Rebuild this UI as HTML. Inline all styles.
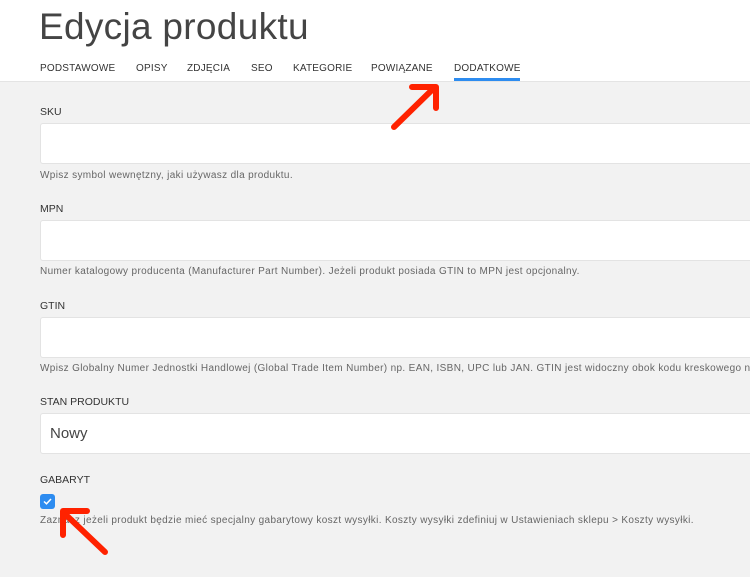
<!DOCTYPE html>
<html><head><meta charset="utf-8"><style>
*{margin:0;padding:0;box-sizing:border-box}
body{width:750px;height:577px;overflow:hidden;background:#f2f2f2;font-family:"Liberation Sans",sans-serif;position:relative}
.hdr{position:absolute;left:0;top:0;width:750px;height:82px;background:#fff;border-bottom:1px solid #e4e4e4}
h1{position:absolute;left:39px;top:6px;font-weight:normal;font-size:37px;color:#444;letter-spacing:0.3px}
.tab{position:absolute;top:63px;font-size:10px;color:#333;letter-spacing:0.2px}
.lbl{position:absolute;left:40px;font-size:10.5px;color:#333}
.inp{position:absolute;left:40px;width:710px;height:41px;background:#fff;border:1px solid #e3e3e3;border-right:none;border-radius:3px 0 0 3px}
.help{position:absolute;left:40px;width:710px;overflow:hidden;font-size:10px;color:#666;white-space:nowrap;letter-spacing:0.35px}
</style></head><body>
<div class="hdr">
<h1>Edycja produktu</h1>
<div class="tab" style="left:40px">PODSTAWOWE</div>
<div class="tab" style="left:136px">OPISY</div>
<div class="tab" style="left:187px">ZDJĘCIA</div>
<div class="tab" style="left:251px">SEO</div>
<div class="tab" style="left:293px">KATEGORIE</div>
<div class="tab" style="left:371px">POWIĄZANE</div>
<div class="tab" style="left:454px">DODATKOWE</div>
<div style="position:absolute;left:454px;top:78px;width:66px;height:3px;background:#2d8cf0"></div>
</div>
<div class="lbl" style="top:106px">SKU</div>
<div class="inp" style="top:123px"></div>
<div class="help" style="top:170px">Wpisz symbol wewnętzny, jaki używasz dla produktu.</div>
<div class="lbl" style="top:203px">MPN</div>
<div class="inp" style="top:220px"></div>
<div class="help" style="top:266px">Numer katalogowy producenta (Manufacturer Part Number). Jeżeli produkt posiada GTIN to MPN jest opcjonalny.</div>
<div class="lbl" style="top:300px">GTIN</div>
<div class="inp" style="top:317px"></div>
<div class="help" style="top:363px">Wpisz Globalny Numer Jednostki Handlowej (Global Trade Item Number) np. EAN, ISBN, UPC lub JAN. GTIN jest widoczny obok kodu kreskowego na opakowaniu.</div>
<div class="lbl" style="top:396px">STAN PRODUKTU</div>
<div class="inp" style="top:413px"><span style="position:absolute;left:9px;top:11px;font-size:15px;color:#444">Nowy</span></div>
<div class="lbl" style="top:474px">GABARYT</div>
<div style="position:absolute;left:40px;top:494px;width:15px;height:15px;background:#2d8cf0;border-radius:3px"><svg width="15" height="15" viewBox="0 0 15 15"><path d="M4 7.5l2.5 2.3L11 5" stroke="#fff" stroke-width="1.5" fill="none"/></svg></div>
<div class="help" style="top:515px">Zaznacz jeżeli produkt będzie mieć specjalny gabarytowy koszt wysyłki. Koszty wysyłki zdefiniuj w Ustawieniach sklepu &gt; Koszty wysyłki.</div>
<svg style="position:absolute;left:0;top:0" width="750" height="577">
<g stroke="#ff2200" stroke-width="6" stroke-linecap="round" stroke-linejoin="round" fill="none">
<path d="M394 127L435 87M412 87H436V108"/>
<path d="M105 552L64 513M87 511H63V535"/>
</g></svg>
</body></html>
